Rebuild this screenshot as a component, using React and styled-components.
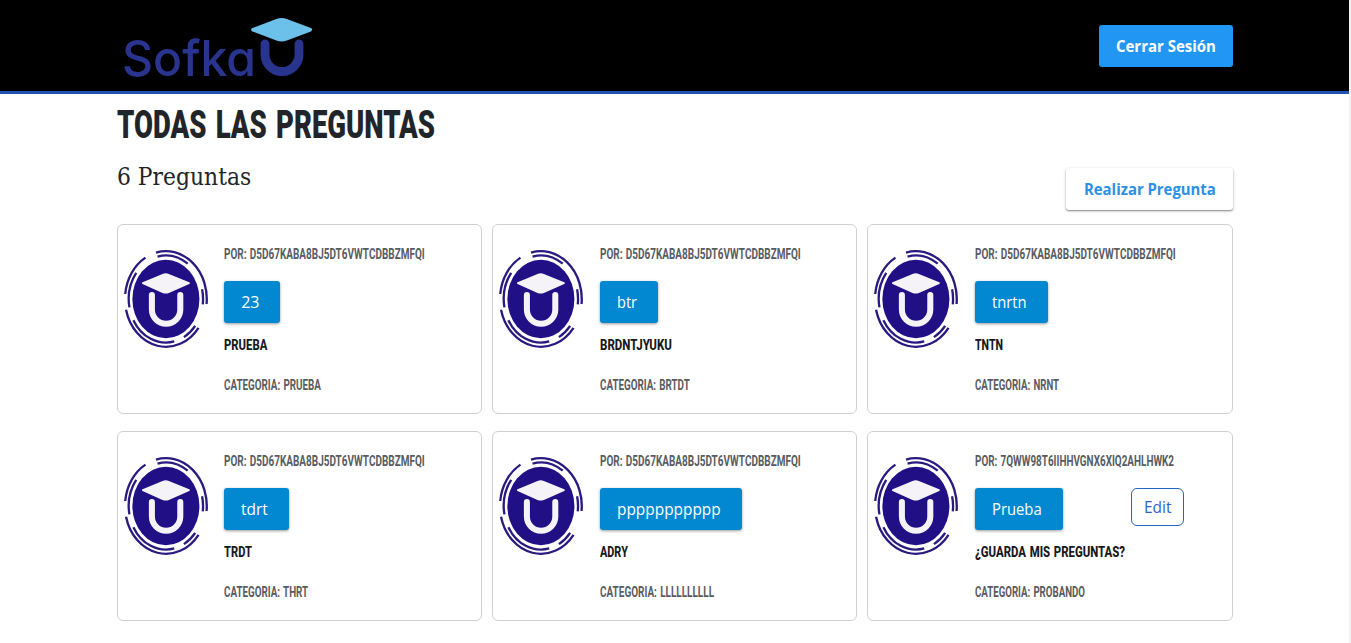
import React, { useLayoutEffect, useRef, useState } from "react";
import styled, { createGlobalStyle } from "styled-components";

const GlobalStyle = createGlobalStyle`
  *, *::before, *::after { box-sizing: border-box; }
  body {
    margin: 0;
    background: #fff;
    color: #212529;
    font-family: "Open Sans", "Noto Sans", sans-serif;
    font-size: 16px;
    overflow: hidden;
  }
  h1, h2, h3, p { margin: 0; font-weight: inherit; font-size: inherit; }
`;

const Page = styled.div`
  height: 643px;
  overflow: hidden;
  border-right: 2px solid #f3f3f3;
`;

const Container = styled.div`
  width: 1116px;
  margin: 0 auto;
`;

const Header = styled.header`
  height: 94px;
  background: #000;
  border-bottom: 3px solid #2353b0;
`;

const HeaderInner = styled(Container)`
  height: 91px;
  display: flex;
  align-items: center;
  justify-content: space-between;
`;

const Logo = styled.svg`
  display: block;
  width: 200px;
  height: 91px;
`;

const FitBox = styled.span`
  display: inline-block;
  vertical-align: top;
  width: ${(p) => p.$width}px;
  white-space: nowrap;
`;

const FitText = styled.span`
  display: inline-block;
  vertical-align: top;
  transform-origin: 0 50%;
`;

const Button = styled.button`
  display: block;
  height: 42px;
  border: 0;
  border-radius: 3px;
  padding: 0 17px;
  font: inherit;
  font-weight: ${(p) => (p.$bold ? 700 : 400)};
  line-height: 42px;
  text-align: left;
  color: #fff;
  background: #2196f3;
`;

const AskButton = styled(Button)`
  margin-top: 8px;
  padding: 0 17px 0 18px;
  color: #2b90e6;
  background: #fff;
  box-shadow: 0 1px 3px rgba(0, 0, 0, 0.3), 0 1px 1px rgba(0, 0, 0, 0.25);
`;

const TagButton = styled(Button)`
  padding: 0 21px 0 17px;
  line-height: 43px;
  background: #0288d1;
  box-shadow: 0 1px 3px rgba(0, 0, 0, 0.4);
`;

const EditButton = styled(Button)`
  height: 38px;
  margin-left: 68px;
  padding: 0 12px;
  border: 1px solid #2464c4;
  border-radius: 6px;
  line-height: 37px;
  color: #2f62c9;
  background: #fff;
`;

const Title = styled.h1`
  margin-top: 5px;
  height: 61px;
  font-family: Roboto, sans-serif;
  font-weight: 900;
  font-size: 39.5px;
  line-height: 52px;
  word-spacing: 0.09em;
`;

const SubHeader = styled.div`
  height: 64px;
  display: flex;
  justify-content: space-between;
  align-items: flex-start;
`;

const Count = styled.h2`
  padding-top: 1px;
  font-family: "DejaVu Serif", serif;
  font-size: 23.5px;
  line-height: 32px;
`;

const Grid = styled.main`
  display: grid;
  grid-template-columns: repeat(3, 365.6px);
  grid-auto-rows: 190px;
  gap: 17px 9.8px;
`;

const Card = styled.article`
  display: flex;
  border: 1px solid #d0d0d0;
  border-radius: 6px;
  padding: 17px 6px;
`;

const Emblem = styled.svg`
  display: block;
  flex: none;
  width: 84.6px;
  height: 100px;
  margin: 7px 16.1px 0 0;
`;

const CardBody = styled.div`
  font-family: Roboto, sans-serif;
  line-height: 24px;
  word-spacing: 0.07em;
`;

const Meta = styled.p`
  height: 24px;
  padding-top: 1px;
  font-size: 14.5px;
  font-weight: 700;
  color: #595c5f;
`;

const Actions = styled.div`
  display: flex;
  align-items: flex-start;
  margin: 15px 0 10px;
  font-family: "Open Sans", "Noto Sans", sans-serif;
`;

const Question = styled.h3`
  height: 24px;
  margin-bottom: 16px;
  font-size: 15.5px;
  font-weight: 800;
  color: #17191c;
`;

/* Scales a line of text horizontally so that it fills the given width. */
function Fit({ width, children }) {
  const ref = useRef(null);
  const [scale, setScale] = useState(1);
  useLayoutEffect(() => {
    setScale(width / ref.current.offsetWidth);
  }, [width, children]);
  return (
    <FitBox $width={width}>
      <FitText ref={ref} style={{ transform: `scaleX(${scale})` }}>
        {children}
      </FitText>
    </FitBox>
  );
}

/* Arc of an ellipse, angles in degrees clockwise from the top. */
function arc(rx, ry, from, to) {
  const at = (deg) => {
    const t = (deg * Math.PI) / 180;
    return `${(41.6 + rx * Math.sin(t)).toFixed(2)} ${(50 - ry * Math.cos(t)).toFixed(2)}`;
  };
  return `M${at(from)}A${rx} ${ry} 0 ${to - from > 180 ? 1 : 0} 1 ${at(to)}`;
}

const rings = [
  [40.6, 47.8, -14, 96],
  [40.6, 47.8, -84, -30],
  [40.6, 47.8, 127, 257],
  [36.9, 43.6, -13, 36],
  [36.9, 43.6, -101, -53],
  [36.9, 43.6, 77, 97],
  [36.9, 43.6, 167, 241],
  [36.9, 43.6, 128, 151],
].map((r) => arc(...r)).join("");

function EmblemIcon() {
  return (
    <Emblem viewBox="0 0 84 100" preserveAspectRatio="none">
      <ellipse cx="41.6" cy="50" rx="33.3" ry="39.2" fill="#210f86" />
      <path d={rings} fill="none" stroke="#2a1a80" strokeWidth="2.3" />
      <path
        d="M18.8 34.2Q29 30 38.6 25.9Q41.4 24.8 44.2 25.9L64.4 34.2L44.2 43Q41.4 44.1 38.6 43Z"
        fill="#f5f3f8"
        stroke="#f5f3f8"
        strokeWidth="2"
        strokeLinejoin="round"
      />
      <path
        d="M27.7 46V60.5a14.1 14.2 0 0 0 28.2 0V46"
        fill="none"
        stroke="#f5f3f8"
        strokeWidth="6"
        strokeLinecap="round"
      />
    </Emblem>
  );
}

const Wordmark = styled.text`
  font-family: Inter, sans-serif;
  font-size: 50px;
  font-weight: 500;
  font-feature-settings: "cv11" 1;
  fill: #29348e;
`;

function SofkaLogo() {
  return (
    <Logo viewBox="0 0 200 91">
      <Wordmark x="5" y="75.5" textLength="134" lengthAdjust="spacingAndGlyphs">
        Sofka
      </Wordmark>
      <path
        d="M148 43.9V54.5a17 17 0 0 0 34 0V43.9"
        fill="none"
        stroke="#29348e"
        strokeWidth="8.8"
        strokeLinecap="round"
      />
      <path
        d="M136 29.7L160 20.6Q164.6 19 169.2 20.6L193.2 29.7L169.2 38.9Q164.6 40.6 160 38.9Z"
        fill="#6bc1ea"
        stroke="#6bc1ea"
        strokeWidth="3.6"
        strokeLinejoin="round"
      />
    </Logo>
  );
}

const AUTHOR = ["POR: D5D67KABA8BJ5DT6VWTCDBBZMFQI", 201];

const questions = [
  { author: AUTHOR, tag: ["23", 18], title: ["PRUEBA", 43], category: ["CATEGORIA: PRUEBA", 97] },
  { author: AUTHOR, tag: ["btr", 20], title: ["BRDNTJYUKU", 72], category: ["CATEGORIA: BRTDT", 90] },
  { author: AUTHOR, tag: ["tnrtn", 35], title: ["TNTN", 28], category: ["CATEGORIA: NRNT", 84] },
  { author: AUTHOR, tag: ["tdrt", 27], title: ["TRDT", 28], category: ["CATEGORIA: THRT", 84] },
  { author: AUTHOR, tag: ["ppppppppppp", 104], title: ["ADRY", 28], category: ["CATEGORIA: LLLLLLLLLL", 114] },
  {
    author: ["POR: 7QWW98T6IIHHVGNX6XIQ2AHLHWK2", 199],
    tag: ["Prueba", 50],
    title: ["¿GUARDA MIS PREGUNTAS?", 150],
    category: ["CATEGORIA: PROBANDO", 110],
    editable: true,
  },
];

function QuestionCard({ author, tag, title, category, editable }) {
  return (
    <Card>
      <EmblemIcon />
      <CardBody>
        <Meta><Fit width={author[1]}>{author[0]}</Fit></Meta>
        <Actions>
          <TagButton><Fit width={tag[1]}>{tag[0]}</Fit></TagButton>
          {editable && <EditButton><Fit width={27}>Edit</Fit></EditButton>}
        </Actions>
        <Question><Fit width={title[1]}>{title[0]}</Fit></Question>
        <Meta><Fit width={category[1]}>{category[0]}</Fit></Meta>
      </CardBody>
    </Card>
  );
}

export default function App() {
  return (
    <>
      <GlobalStyle />
      <Page>
        <Header>
          <HeaderInner>
            <SofkaLogo />
            <Button $bold><Fit width={100}>Cerrar Sesión</Fit></Button>
          </HeaderInner>
        </Header>
        <Container>
          <Title><Fit width={318}>TODAS LAS PREGUNTAS</Fit></Title>
          <SubHeader>
            <Count><Fit width={134}>6 Preguntas</Fit></Count>
            <AskButton $bold><Fit width={132}>Realizar Pregunta</Fit></AskButton>
          </SubHeader>
          <Grid>
            {questions.map((q, i) => (
              <QuestionCard key={i} {...q} />
            ))}
          </Grid>
        </Container>
      </Page>
    </>
  );
}
